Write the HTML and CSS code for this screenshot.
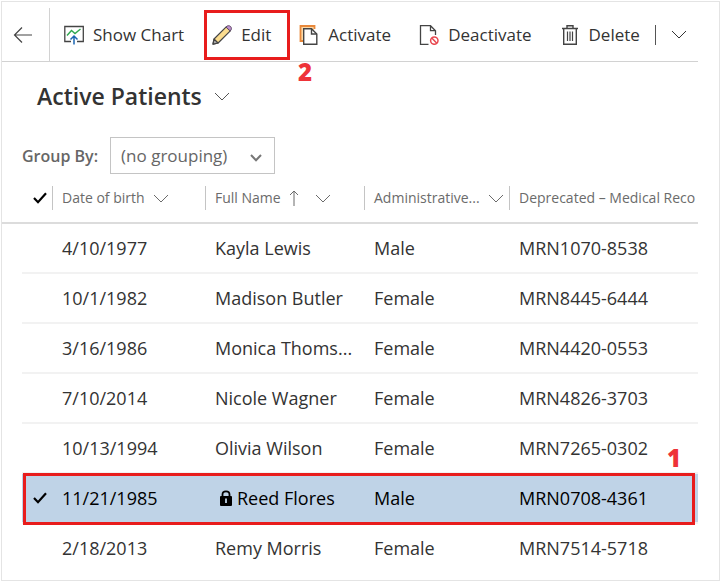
FILE: index.html
```html
<!DOCTYPE html>
<html lang="en">
<head>
  <meta charset="UTF-8">
  <meta name="viewport" content="width=device-width, initial-scale=1.0">
  <title>Active Patients</title>
  <link rel="stylesheet" href="styles.css">
</head>
<body>
  <!-- Shared icons -->
  <svg class="icon-defs" aria-hidden="true">
    <symbol id="chevron" viewBox="0 0 16 9">
      <path d="M1 1L8 8L15 1" fill="none" stroke="currentColor"/>
    </symbol>
    <symbol id="check" viewBox="0 0 14 12">
      <path d="M1 6L5 10.2L13 1.2" fill="none" stroke="currentColor" stroke-width="2.2"/>
    </symbol>
  </svg>

  <div class="frame">
    <!-- Command bar -->
    <div class="toolbar">
      <button class="back-button" aria-label="Back">
        <svg width="20" height="16" viewBox="0 0 20 16" fill="none" stroke="#444" stroke-width="1.2">
          <path d="M1.5 8H19M9 0.5L1.5 8L9 15.5"/>
        </svg>
      </button>
      <div class="commands">
        <button class="command">
          <svg width="20" height="20" viewBox="0 0 20 20" fill="none">
            <path d="M7 16.5H0.8V1.5H19.3V16.5H13" stroke="#444" stroke-width="1.3"/>
            <path d="M3 10.5L7.5 5.5L11 8.5L16.5 4" stroke="#2fa84f" stroke-width="1.4"/>
            <path d="M10 19.5V11.5M6.5 14.5L10 11L13.5 14.5" stroke="#1b66b3" stroke-width="1.5"/>
          </svg>
          Show Chart
        </button>
        <button class="command edit-command">
          <svg width="20" height="20" viewBox="0 0 20 20" stroke-linejoin="round">
            <path d="M1 19.2L2 14L14.2 1.8L18.3 5.9L6.1 18Z" fill="#fbdc8e" stroke="#444" stroke-width="1.2"/>
            <path d="M14 2C15.3 0.4 17.3 0.3 18.6 1.5C19.8 2.8 19.6 4.8 18.2 6Z" fill="#c08fd0" stroke="#5d4a66"/>
            <path d="M1 19.2L2 14L6.1 18Z" fill="#aaa" stroke="#444" stroke-width="1.2"/>
          </svg>
          Edit
        </button>
        <button class="command">
          <svg width="20" height="20" viewBox="0 0 20 20">
            <path d="M4 16H1.5V1H15.5V4" fill="#fbd9a8" stroke="#e8883a" stroke-width="1.8"/>
            <path d="M4.7 3.7H12.5L17.8 9V19.2H4.7Z" fill="#fff" stroke="#444" stroke-width="1.4"/>
            <path d="M12.5 3.7V9H17.8" fill="none" stroke="#444" stroke-width="1.4"/>
          </svg>
          Activate
        </button>
        <button class="command">
          <svg width="20" height="20" viewBox="0 0 20 20" fill="none">
            <path d="M9.5 19.3H1.5V0.7H11.5L16.5 5.7V10M11.5 0.7V5.7H16.5" stroke="#444" stroke-width="1.3"/>
            <circle cx="15.3" cy="15.6" r="3.7" stroke="#e8474f" stroke-width="1.5"/>
            <path d="M12.8 13L17.8 18.2" stroke="#e8474f" stroke-width="1.5"/>
          </svg>
          Deactivate
        </button>
        <button class="command">
          <svg width="20" height="20" viewBox="0 0 20 20" fill="none" stroke="#444" stroke-width="1.2">
            <path d="M2 3.5H18M7 3.5V0.8H13V3.5M3.7 3.5V19.2H16.3V3.5" stroke-width="1.4"/>
            <path d="M7.5 6.5V16M10 6.5V16M12.5 6.5V16"/>
          </svg>
          Delete
        </button>
        <button class="more-button" aria-label="More commands">
          <svg width="16" height="9"><use href="#chevron"/></svg>
        </button>
      </div>
      <span class="step step-two">2</span>
    </div>

    <!-- View title -->
    <h1 class="view-title">
      <button class="view-button">
        Active Patients
        <svg width="16" height="9"><use href="#chevron"/></svg>
      </button>
    </h1>

    <div class="group-by">
      <label for="grouping">Group By:</label>
      <div class="select-box">
        <select id="grouping">
          <option>(no grouping)</option>
        </select>
        <svg width="12" height="8" viewBox="0 0 12 8">
          <path d="M1 1L6 6.2L11 1" fill="none" stroke="#777" stroke-width="2"/>
        </svg>
      </div>
    </div>

    <!-- Patients grid -->
    <div class="grid">
      <table>
        <colgroup>
          <col class="col-check">
          <col class="col-date">
          <col class="col-name">
          <col class="col-gender">
          <col>
        </colgroup>
        <thead>
          <tr>
            <th class="check-cell"><label><input type="checkbox" aria-label="Select all" checked><svg width="14" height="12"><use href="#check"/></svg></label></th>
            <th><button class="column-button">Date of birth <svg width="16" height="9"><use href="#chevron"/></svg></button></th>
            <th>
              <button class="column-button">
                Full Name
                <svg class="sort-icon" width="10" height="16" viewBox="0 0 10 16" fill="none" stroke="currentColor"><path d="M5 16V1M1 5L5 1L9 5"/></svg>
                <svg width="16" height="9"><use href="#chevron"/></svg>
              </button>
            </th>
            <th><button class="column-button">Administrative... <svg width="16" height="9"><use href="#chevron"/></svg></button></th>
            <th><button class="column-button">Deprecated – Medical Reco</button></th>
          </tr>
        </thead>
        <tbody>
          <tr>
            <td class="check-cell"><label><input type="checkbox" aria-label="Select Kayla Lewis"><svg width="14" height="12"><use href="#check"/></svg></label></td>
            <td>4/10/1977</td>
            <td>Kayla Lewis</td>
            <td>Male</td>
            <td>MRN1070-8538</td>
          </tr>
          <tr>
            <td class="check-cell"><label><input type="checkbox" aria-label="Select Madison Butler"><svg width="14" height="12"><use href="#check"/></svg></label></td>
            <td>10/1/1982</td>
            <td>Madison Butler</td>
            <td>Female</td>
            <td>MRN8445-6444</td>
          </tr>
          <tr>
            <td class="check-cell"><label><input type="checkbox" aria-label="Select Monica Thoms"><svg width="14" height="12"><use href="#check"/></svg></label></td>
            <td>3/16/1986</td>
            <td>Monica Thoms...</td>
            <td>Female</td>
            <td>MRN4420-0553</td>
          </tr>
          <tr>
            <td class="check-cell"><label><input type="checkbox" aria-label="Select Nicole Wagner"><svg width="14" height="12"><use href="#check"/></svg></label></td>
            <td>7/10/2014</td>
            <td>Nicole Wagner</td>
            <td>Female</td>
            <td>MRN4826-3703</td>
          </tr>
          <tr>
            <td class="check-cell"><label><input type="checkbox" aria-label="Select Olivia Wilson"><svg width="14" height="12"><use href="#check"/></svg></label></td>
            <td>10/13/1994</td>
            <td>Olivia Wilson</td>
            <td>Female</td>
            <td>MRN7265-0302</td>
          </tr>
          <tr class="selected">
            <td class="check-cell"><label><input type="checkbox" aria-label="Select Reed Flores" checked><svg width="14" height="12"><use href="#check"/></svg></label></td>
            <td>11/21/1985</td>
            <td>
              <span class="locked-name">
                <svg width="14" height="16" viewBox="0 0 14 16">
                  <path d="M3.5 7V4.5C3.5 0.2 10.5 0.2 10.5 4.5V7" fill="none" stroke="#000" stroke-width="1.8"/>
                  <rect x="1" y="6" width="12" height="10" rx="1"/>
                  <path d="M7 8.5V13" stroke="#bfd3e7" stroke-width="1.8"/>
                </svg>
                Reed Flores
              </span>
            </td>
            <td>Male</td>
            <td>MRN0708-4361<span class="step step-one">1</span></td>
          </tr>
          <tr>
            <td class="check-cell"><label><input type="checkbox" aria-label="Select Remy Morris"><svg width="14" height="12"><use href="#check"/></svg></label></td>
            <td>2/18/2013</td>
            <td>Remy Morris</td>
            <td>Female</td>
            <td>MRN7514-5718</td>
          </tr>
        </tbody>
      </table>
    </div>
  </div>
</body>
</html>
```
FILE: styles.css
```css
* {
  margin: 0;
  padding: 0;
  box-sizing: border-box;
}
body {
  background-color: #fff;
  color: #333;
  font-family: 'Open Sans', 'Noto Sans', sans-serif;
  font-size: 18px;
  line-height: 24px;
}
button, select {
  font: inherit;
  color: inherit;
  background: none;
  border: none;
  cursor: pointer;
}
svg {
  flex: none;
}
.icon-defs {
  display: none;
}
.frame {
  margin: 1px;
  padding: 0 21px 6px 0;
  border: 1px solid #e4e4e4;
}
/* Command bar */
.toolbar {
  position: relative;
  display: flex;
  height: 60px;
  padding-top: 6px;
  border-bottom: 1px solid #d2d2d2;
}
.back-button {
  display: flex;
  align-items: center;
  width: 48px;
  padding-left: 11px;
  border-right: 1px solid #d2d2d2;
}
.commands {
  display: flex;
  align-items: center;
  gap: 28px;
  padding-left: 14px;
  font-size: 17px;
}
.command {
  position: relative;
  display: flex;
  align-items: center;
  gap: 9px;
  white-space: nowrap;
}
.more-button {
  display: flex;
  align-items: center;
  height: 20px;
  margin-left: -13px;
  padding-left: 15px;
  border-left: 1px solid #555;
}
/* Red call-outs */
.edit-command::after {
  content: '';
  position: absolute;
  inset: -13px -19px -13px -8px;
  border: 3px solid #e81c1c;
}
.step {
  position: absolute;
  color: #ee3338;
  font-size: 24px;
  font-weight: 800;
}
.step-two {
  top: 58px;
  left: 296px;
}
.step-one {
  top: -28px;
  right: 17px;
}
/* View title */
.view-title {
  padding: 18px 0 0 35px;
  font-size: 23px;
  font-weight: 600;
  line-height: 32px;
}
.view-button {
  display: flex;
  align-items: center;
  gap: 12px;
}
.view-button svg {
  color: #555;
}
.group-by {
  display: flex;
  align-items: center;
  gap: 12px;
  padding: 25px 0 0 20px;
  color: #666;
  font-size: 17px;
}
.group-by label {
  font-size: 16px;
  font-weight: 600;
}
.select-box {
  position: relative;
}
.select-box select {
  appearance: none;
  width: 165px;
  height: 37px;
  padding: 0 10px;
  border: 1px solid #c4c4c4;
}
.select-box svg {
  position: absolute;
  top: 17px;
  right: 13px;
  pointer-events: none;
}
/* Patients grid */
.grid {
  padding-left: 20px;
}
table {
  width: 100%;
  table-layout: fixed;
  border-spacing: 0;
}
.col-check {
  width: 30px;
}
.col-date {
  width: 153px;
}
.col-name {
  width: 159px;
}
.col-gender {
  width: 145px;
}
th {
  position: relative;
  height: 50px;
  border-bottom: 2px solid #dcdcdc;
  color: #6b6b6b;
  font-size: 14px;
  font-weight: 400;
  text-align: left;
}
/* carries the header line out to the frame */
th:first-child::before {
  content: '';
  position: absolute;
  bottom: -2px;
  left: -20px;
  width: 20px;
  height: 2px;
  background-color: #dcdcdc;
}
.column-button {
  display: flex;
  align-items: center;
  gap: 8px;
  width: 100%;
  padding-left: 9px;
  border-left: 1px solid #c4c4c4;
  white-space: nowrap;
}
.sort-icon {
  margin-right: 8px;
}
td {
  height: 50px;
  padding-left: 10px;
  border-bottom: 2px solid #f2f2f2;
  white-space: nowrap;
}
tbody tr:last-child td {
  border-color: transparent;
}
.check-cell {
  padding-left: 11px;
  color: #000;
}
.check-cell label {
  display: flex;
  position: relative;
}
.check-cell input {
  position: absolute;
  width: 14px;
  height: 12px;
  opacity: 0;
}
.check-cell input:not(:checked) + svg {
  visibility: hidden;
}
.selected {
  position: relative;
  background-color: #bfd3e7;
  color: #000;
}
.selected .check-cell::after {
  content: '';
  position: absolute;
  inset: -1px 3px -1px 1px;
  border: 3px solid #e81c1c;
  pointer-events: none;
}
.locked-name {
  display: flex;
  align-items: center;
  gap: 4px;
  padding-left: 4px;
}
```
